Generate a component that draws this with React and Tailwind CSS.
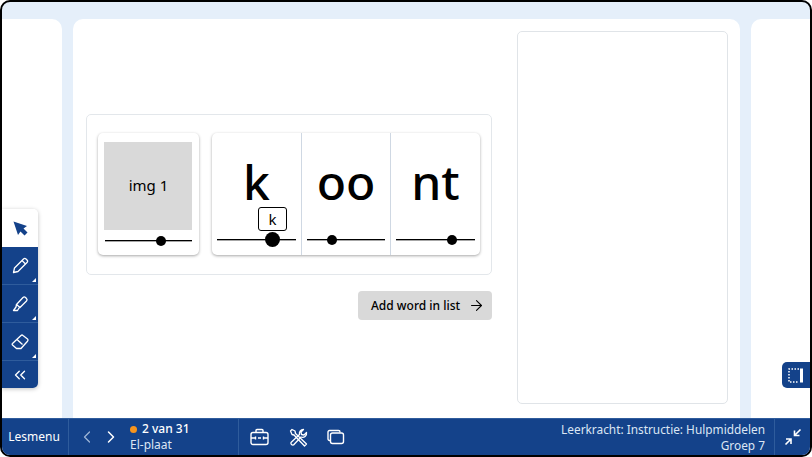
import React from 'react';
import { ArrowRight, ChevronLeft, ChevronRight, ChevronsLeft } from 'lucide-react';

const Corner = () => (
    <span className="absolute right-[2px] bottom-[2px] w-0 h-0 border-l-[4px] border-l-transparent border-b-[4px] border-b-white" />
);

const ToolButton = ({ children }) => (
    <div className="relative h-[38px] flex items-center justify-center border-b border-[#2f5c9c] text-white">
        {children}
        <Corner />
    </div>
);

const Slider = ({ left, big }) => (
    <div className="relative h-px bg-black shadow-[0_1px_0_rgba(0,0,0,0.35)]">
        <span
            className={big
                ? 'absolute w-[15px] h-[15px] -top-[7px] -ml-[7px] rounded-full bg-black'
                : 'absolute w-[10px] h-[10px] -top-[4px] -ml-[5px] rounded-full bg-black'}
            style={{ left }}
        />
    </div>
);

const LetterCell = ({ text, left, big, width, children }) => (
    <div className={`relative flex flex-col ${width}`}>
        <div className="h-[98px] flex items-center justify-center text-[48px] font-medium leading-none text-black">{text}</div>
        <div className="px-[5px] mt-[8px]">
            <Slider left={left} big={big} />
        </div>
        {children}
    </div>
);

export default function App() {
    return (
        <div className="w-[812px] h-[457px] bg-white overflow-hidden" style={{ fontFamily: '"Noto Sans", sans-serif' }}>
            <div className="relative w-full h-full border-2 border-black rounded-[10px] overflow-hidden bg-[#e5effa] flex flex-col">
                <div className="flex-1 min-h-0 flex gap-[11px] pt-[17px]">
                    <div className="w-[60px] bg-white rounded-tr-[10px]" />
                    <div className="w-[667px] bg-white rounded-t-[10px] flex gap-[25px] pl-[13px] pt-[12px] pb-[14px]">
                        <div className="w-[406px] pt-[83px] flex flex-col items-end">
                            <div className="w-full h-[161px] border border-[#e3e7eb] rounded-[5px] bg-white flex items-start gap-[13px] pt-[18px] pl-[11px]">
                                <div className="w-[101px] h-[122px] rounded-[5px] bg-white shadow-[0_1px_3px_rgba(0,0,0,0.35)] px-[6px] pt-[9px]">
                                    <div className="w-[88px] h-[88px] bg-[#d9d9d9] flex items-center justify-center pb-[2px] pl-[1px] text-[15px] text-black">img 1</div>
                                    <div className="mt-[10px] mx-[1px]">
                                        <Slider left="56px" />
                                    </div>
                                </div>
                                <div className="h-[122px] rounded-[5px] bg-white shadow-[0_1px_3px_rgba(0,0,0,0.35)] flex">
                                    <LetterCell text="k" left="55px" big width="w-[90px] border-r border-[#cfd8e3]">
                                        <div className="absolute left-[46px] top-[74px] w-[29px] h-[24px] bg-white border border-black rounded-[3px] flex items-center justify-center text-[15px] leading-none text-black">k</div>
                                    </LetterCell>
                                    <LetterCell text="oo" left="25px" width="w-[89px] border-r border-[#cfd8e3]" />
                                    <LetterCell text="nt" left="56px" width="w-[89px]" />
                                </div>
                            </div>
                            <button className="mt-[16px] w-[134px] h-[29px] rounded-[4px] bg-[#d9d9d9] flex items-center pl-[13px] gap-[8px] text-[12px] font-medium text-black">
                                Add word in list
                                <ArrowRight size={17} strokeWidth={1.5} />
                            </button>
                        </div>
                        <div className="w-[211px] border border-[#e0e4e8] rounded-[5px] bg-white" />
                    </div>
                    <div className="flex-1 bg-white rounded-tl-[10px]" />
                </div>

                <div className="h-[37px] bg-[#14428a] flex items-center text-white border-t border-[#2f5c9c]">
                    <div className="w-[67px] h-full flex items-center justify-center pr-[2px] text-[12px] border-r border-[#2f5c9c]">Lesmenu</div>
                    <div className="flex items-center w-[170px] h-full border-r border-[#2f5c9c]">
                        <ChevronLeft size={20} strokeWidth={1.5} className="ml-[8px] text-[#9db4d6]" />
                        <ChevronRight size={20} strokeWidth={1.8} className="ml-[4px]" />
                        <div className="ml-[9px] leading-[16px] text-[12px]">
                            <div className="flex items-center gap-[5px] font-medium">
                                <span className="w-[7px] h-[7px] rounded-full bg-[#f7941d]" />
                                2 van 31
                            </div>
                            <div className="text-[#dce6f4]">El-plaat</div>
                        </div>
                    </div>
                    <div className="flex items-center gap-[20px] pl-[11px] flex-1">
                        <svg width="19" height="18" viewBox="0 0 19 18" fill="none" stroke="currentColor" strokeWidth="1.4">
                            <rect x="1" y="4.5" width="17" height="12" rx="2" />
                            <path d="M6 4.5V2.5a1 1 0 0 1 1-1h5a1 1 0 0 1 1 1v2" />
                            <path d="M1 10h4M8 10h3M14 10h4" />
                            <path d="M5.500 8.500v3M13.500 8.500v3" />
                        </svg>
                        <svg width="19" height="19" viewBox="0 0 19 19" fill="none" stroke="currentColor" strokeWidth="1.3" strokeLinejoin="round">
                            <path d="M1.500 3 3 1.500l3 1.500.5 2.500 11 10.500-2 2L5 7 3 6.500z" />
                            <path d="M17.500 4.500 15 7l-2.500-.5-.5-2.500 2.500-2.500a4 4 0 0 0-4 5L2 14.500a2 2 0 0 0 2.500 2.500L12 9a4 4 0 0 0 5.500-4.500z" />
                        </svg>
                        <svg width="18" height="16" viewBox="0 0 18 16" fill="none" stroke="currentColor" strokeWidth="1.4" className="-ml-[1px]">
                            <path d="M3 11.500H2.500a1.500 1.500 0 0 1-1.500-1.500V3a1.500 1.500 0 0 1 1.500-1.500h9A1.500 1.500 0 0 1 13 3v.500" />
                            <rect x="3.500" y="4" width="13" height="10.500" rx="2" />
                        </svg>
                    </div>
                    <div className="text-right text-[11.85px] leading-[16px] text-[#dce6f4] pr-[9px]">
                        <div>Leerkracht: Instructie: Hulpmiddelen</div>
                        <div>Groep 7</div>
                    </div>
                    <div className="w-[36px] h-full flex items-center justify-center border-l border-[#2f5c9c]">
                        <svg width="18" height="18" viewBox="0 0 18 18" fill="none" stroke="currentColor" strokeWidth="1.6">
                            <path d="M16.500 1.500 10.500 7.500M10.500 2.500v5h5" />
                            <path d="M7 11 1.500 16.500M2 11h5v5" />
                        </svg>
                    </div>
                </div>

                <div className="absolute left-0 top-[207px] w-[36px] rounded-r-[5px] overflow-hidden shadow-[0_1px_4px_rgba(0,0,0,0.25)]">
                    <div className="h-[38px] bg-white flex items-center justify-center">
                        <svg width="15" height="15" viewBox="0 0 15 15" fill="#14428a">
                            <path d="M.5.500 14 5 10.500 7.500l4 4-3 3-4-4L5 14z" />
                        </svg>
                    </div>
                    <div className="bg-[#14428a]">
                        <ToolButton>
                            <svg width="17" height="17" viewBox="0 0 17 17" fill="none" stroke="currentColor" strokeWidth="1.3" strokeLinejoin="round">
                                <path d="M1.500 15.500 2.500 11 11.500 2a1.800 1.800 0 0 1 2.500 0l1 1a1.800 1.800 0 0 1 0 2.500L6 14.500z" />
                                <path d="M10 3.500 13.500 7" />
                            </svg>
                        </ToolButton>
                        <ToolButton>
                            <svg width="17" height="17" viewBox="0 0 17 17" fill="none" stroke="currentColor" strokeWidth="1.3" strokeLinejoin="round">
                                <path d="M4.500 9.500 11 2.500a1.800 1.800 0 0 1 2.500 0l1 1a1.800 1.800 0 0 1 0 2.500L8 12.500z" />
                                <path d="M4.500 9.500 4 12l-2.500 3.500h4L7 13l1-.5" />
                            </svg>
                        </ToolButton>
                        <ToolButton>
                            <svg width="18" height="16" viewBox="0 0 18 16" fill="none" stroke="currentColor" strokeWidth="1.3" strokeLinejoin="round">
                                <path d="M1.500 9.500 10 1.500a1.500 1.500 0 0 1 2 0l4.500 3.500a1.500 1.500 0 0 1 0 2.200L10 14.500H5.500L1.500 11a1 1 0 0 1 0-1.500z" />
                                <path d="M6 5.500 11.500 10.500" />
                            </svg>
                        </ToolButton>
                        <div className="h-[27px] flex items-center justify-center text-white">
                            <ChevronsLeft size={18} strokeWidth={1.8} />
                        </div>
                    </div>
                </div>

                <div className="absolute right-0 top-[360px] w-[28px] h-[26px] bg-[#14428a] rounded-l-[5px] flex items-center justify-center text-white">
                    <svg width="16" height="15" viewBox="0 0 16 15" fill="none" stroke="currentColor">
                        <path d="M11 1H1v13h10" strokeDasharray="1.500 1.500" strokeWidth="1.500" />
                        <rect x="12" y="0.500" width="3" height="14" fill="currentColor" stroke="none" />
                    </svg>
                </div>
            </div>
        </div>
    );
}
